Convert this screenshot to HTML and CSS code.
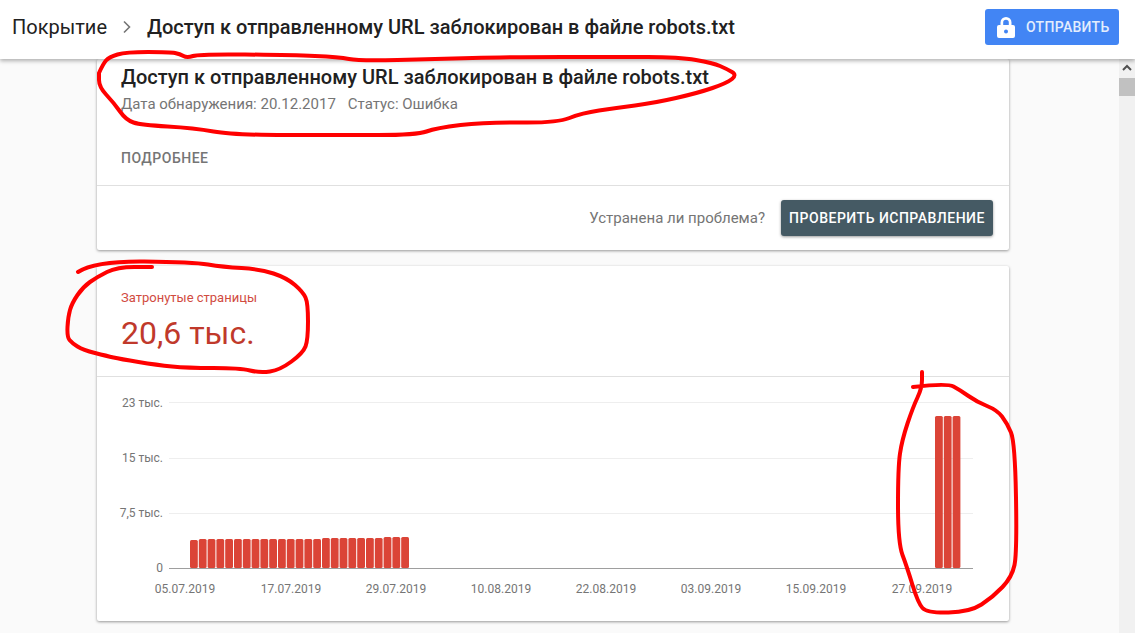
FILE: index.html
```html
<!DOCTYPE html>
<html lang="ru">
<head>
    <meta charset="UTF-8">
    <title>Покрытие</title>
    <link rel="stylesheet" href="styles.css">
</head>
<body>
    <header class="top-bar">
        <span class="crumb">Покрытие</span>
        <svg class="chevron" width="10" height="14" viewBox="0 0 10 14"><path d="M2 1.500 7.500 7 2 12.500" fill="none" stroke="#757575" stroke-width="1.600"/></svg>
        <span class="crumb-title">Доступ к отправленному URL заблокирован в файле robots.txt</span>
        <button class="send-button">
            <svg width="18" height="21" viewBox="0 0 18 21"><path fill="#fff" fill-rule="evenodd" d="M16 8h-1.500V5.500a5.500 5.500 0 0 0-11 0V8H2a2 2 0 0 0-2 2v9a2 2 0 0 0 2 2h14a2 2 0 0 0 2-2v-9a2 2 0 0 0-2-2ZM9 16.500a2 2 0 1 1 0-4 2 2 0 0 1 0 4ZM11.800 8H6.200V5.500a2.800 2.800 0 0 1 5.600 0Z"/></svg>
            ОТПРАВИТЬ
        </button>
    </header>

    <div class="page">
        <main class="content">
            <section class="card">
                <div class="issue-head">
                    <h1>Доступ к отправленному URL заблокирован в файле robots.txt</h1>
                    <p class="issue-meta"><span>Дата обнаружения: 20.12.2017</span><span>Статус: Ошибка</span></p>
                    <a class="more-link">ПОДРОБНЕЕ</a>
                </div>
                <div class="issue-actions">
                    <span>Устранена ли проблема?</span>
                    <button class="check-button">ПРОВЕРИТЬ ИСПРАВЛЕНИЕ</button>
                </div>
            </section>

            <section class="card">
                <div class="stat">
                    <div class="stat-label">Затронутые страницы</div>
                    <div class="stat-value">20,6 тыс.</div>
                </div>
                <svg class="chart" width="912" height="244" viewBox="97 377 912 244">
                    <g class="grid">
                        <line x1="169" x2="973" y1="402.500" y2="402.500"/>
                        <line x1="169" x2="973" y1="458.500" y2="458.500"/>
                        <line x1="169" x2="973" y1="513.500" y2="513.500"/>
                    </g>
                    <g class="y-labels">
                        <text x="163" y="407">23 тыс.</text>
                        <text x="163" y="462">15 тыс.</text>
                        <text x="163" y="517">7,5 тыс.</text>
                        <text x="163" y="572">0</text>
                    </g>
                    <g class="bars" id="bars"></g>
                    <line class="axis" x1="169" x2="973" y1="568.500" y2="568.500"/>
                    <g class="x-labels">
                        <text x="185" y="593">05.07.2019</text>
                        <text x="291" y="593">17.07.2019</text>
                        <text x="396" y="593">29.07.2019</text>
                        <text x="501" y="593">10.08.2019</text>
                        <text x="606" y="593">22.08.2019</text>
                        <text x="711" y="593">03.09.2019</text>
                        <text x="816" y="593">15.09.2019</text>
                        <text x="922" y="593">27.09.2019</text>
                    </g>
                </svg>
            </section>
        </main>
        <div class="scrollbar">
            <svg width="16" height="17" viewBox="0 0 16 17"><path d="M4 11 8 7l4 4" fill="none" stroke="#505050" stroke-width="2"/></svg>
            <div class="scroll-thumb"></div>
        </div>
    </div>

    <!-- красные пометки поверх скриншота -->
    <svg class="scribbles" id="scribbles" width="1135" height="633" viewBox="0 0 1135 633"></svg>

    <script>
        // столбцы графика
        const heights = [28, 29, 29, 29, 29, 29, 29, 29, 29, 29, 29, 29, 29, 29, 29, 30, 30, 30, 30, 30, 30, 30, 31, 31, 31];
        const tail = [152, 152, 152];
        let html = '';
        heights.forEach((h, i) => {
            html += '<rect x="' + (190 + i * 8.8) + '" y="' + (568 - h) + '" width="7.800" height="' + h + '" rx="1.500"/>';
        });
        tail.forEach((h, i) => {
            html += '<rect x="' + (935 + i * 8.8) + '" y="' + (568 - h) + '" width="7.800" height="' + h + '" rx="1.500"/>';
        });
        document.getElementById('bars').innerHTML = html;

        // пометки: точки сглаживаем через середины отрезков
        const marks = [
            [[99,73],[103,64],[109,57],[126,52],[170,52],[180,54],[187,58],[199,54],[291,55],[339,57],[359,61],[436,59],[509,57],[616,57],[679,57],[713,63],[727,69],[737,75],[727,83],[698,93],[654,103],[616,108],[582,113],[557,123],[485,122],[436,128],[417,135],[339,135],[233,135],[194,128],[141,125],[126,120],[114,103],[99,87],[99,73]],
            [[78,272],[95,261],[193,262],[223,267],[260,269],[287,278],[303,292],[308,303],[308,340],[303,353],[280,370],[260,373],[240,368],[187,368],[157,365],[120,359],[107,356],[83,350],[72,343],[67,337],[68,317],[72,303],[83,287],[97,277],[117,267],[152,267]],
            [[913,387],[947,383],[960,390],[977,402],[997,410],[1007,423],[1015,442],[1017,553],[1012,577],[993,597],[970,612],[927,613],[918,603],[907,567],[898,543],[898,467],[902,440],[913,407],[922,388],[922,372]]
        ];
        let marksHtml = '';
        marks.forEach(pts => {
            let d = 'M' + pts[0][0] + ' ' + pts[0][1];
            for (let i = 1; i < pts.length - 1; i++) {
                const mx = (pts[i][0] + pts[i + 1][0]) / 2;
                const my = (pts[i][1] + pts[i + 1][1]) / 2;
                d += 'Q' + pts[i][0] + ' ' + pts[i][1] + ' ' + mx + ' ' + my;
            }
            const last = pts[pts.length - 1];
            d += 'L' + last[0] + ' ' + last[1];
            marksHtml += '<path d="' + d + '"/>';
        });
        document.getElementById('scribbles').innerHTML = marksHtml;
    </script>
</body>
</html>
```

FILE: styles.css
```css
html, body {
    height: 100%;
}
body {
    margin: 0;
    overflow: hidden;
    font-family: Roboto, Arial, sans-serif;
    background: #fafafa;
    color: #212121;
    display: flex;
    flex-direction: column;
}
.top-bar {
    flex: none;
    height: 59px;
    display: flex;
    align-items: center;
    padding: 0 16px 5px 12px;
    box-sizing: border-box;
    background: white;
    box-shadow: 0 2px 4px rgba(0,0,0,0.3);
    position: relative;
    z-index: 2;
}
.crumb {
    font-size: 20px;
    color: #212121;
}
.chevron {
    margin: 0 15px;
}
.crumb-title {
    font-size: 20px;
    font-weight: 500;
}
.send-button {
    margin-left: auto;
    width: 134px;
    height: 36px;
    display: flex;
    align-items: center;
    gap: 11px;
    padding: 0 0 0 12px;
    border: none;
    border-radius: 3px;
    background: #4285f4;
    color: #e3edfd;
    font-family: inherit;
    font-size: 14px;
    font-weight: 500;
    letter-spacing: 0.3px;
}
.page {
    flex: 1;
    display: flex;
    min-height: 0;
}
.content {
    flex: 1;
    padding: 0 110px 0 97px;
    overflow: hidden;
}
.scrollbar {
    flex: none;
    width: 16px;
    background: #f1f1f1;
}
.scrollbar svg {
    display: block;
}
.scroll-thumb {
    height: 18px;
    margin-top: 2px;
    background: #c1c1c1;
}
.card {
    background: white;
    border-radius: 2px;
    box-shadow: 0 1px 3px rgba(0,0,0,0.4);
    margin-bottom: 16px;
}
.issue-head {
    height: 127px;
    box-sizing: border-box;
    padding: 6px 24px 0;
    border-bottom: 1px solid #e0e0e0;
}
.issue-head h1 {
    margin: 0;
    font-size: 20px;
    line-height: 24px;
    font-weight: 500;
}
.issue-meta {
    margin: 5px 0 0;
    font-size: 15px;
    line-height: 20px;
    color: #757575;
    display: flex;
    gap: 12px;
}
.more-link {
    display: block;
    margin-top: 34px;
    font-size: 14px;
    line-height: 20px;
    font-weight: 500;
    letter-spacing: 0.5px;
    color: #757575;
}
.issue-actions {
    height: 64px;
    display: flex;
    align-items: center;
    justify-content: flex-end;
    gap: 16px;
    padding: 0 16px;
    font-size: 15px;
    color: #757575;
}
.check-button {
    width: 212px;
    height: 36px;
    padding: 0;
    border: none;
    border-radius: 3px;
    background: #455a64;
    color: white;
    font-family: inherit;
    font-size: 14px;
    font-weight: 500;
    letter-spacing: 0.5px;
    box-shadow: 0 1px 3px rgba(0,0,0,0.4);
}
.stat {
    height: 111px;
    box-sizing: border-box;
    padding: 24px 24px 0;
    border-bottom: 1px solid #e0e0e0;
    color: #c0392b;
}
.stat-label {
    font-size: 13px;
    line-height: 16px;
    color: #d14b3f;
}
.stat-value {
    margin-top: 5px;
    font-size: 32px;
    line-height: 44px;
}
.chart {
    display: block;
}
.chart text {
    font-size: 12px;
    fill: #757575;
}
.grid line {
    stroke: #eeeeee;
}
.axis {
    stroke: #9e9e9e;
}
.y-labels text {
    text-anchor: end;
}
.x-labels text {
    text-anchor: middle;
}
.bars rect {
    fill: #db4437;
}
.scribbles {
    position: absolute;
    top: 0;
    left: 0;
    z-index: 3;
    pointer-events: none;
}
.scribbles path {
    fill: none;
    stroke: #ff0000;
    stroke-width: 4;
    stroke-linejoin: round;
    stroke-linecap: round;
}
```
